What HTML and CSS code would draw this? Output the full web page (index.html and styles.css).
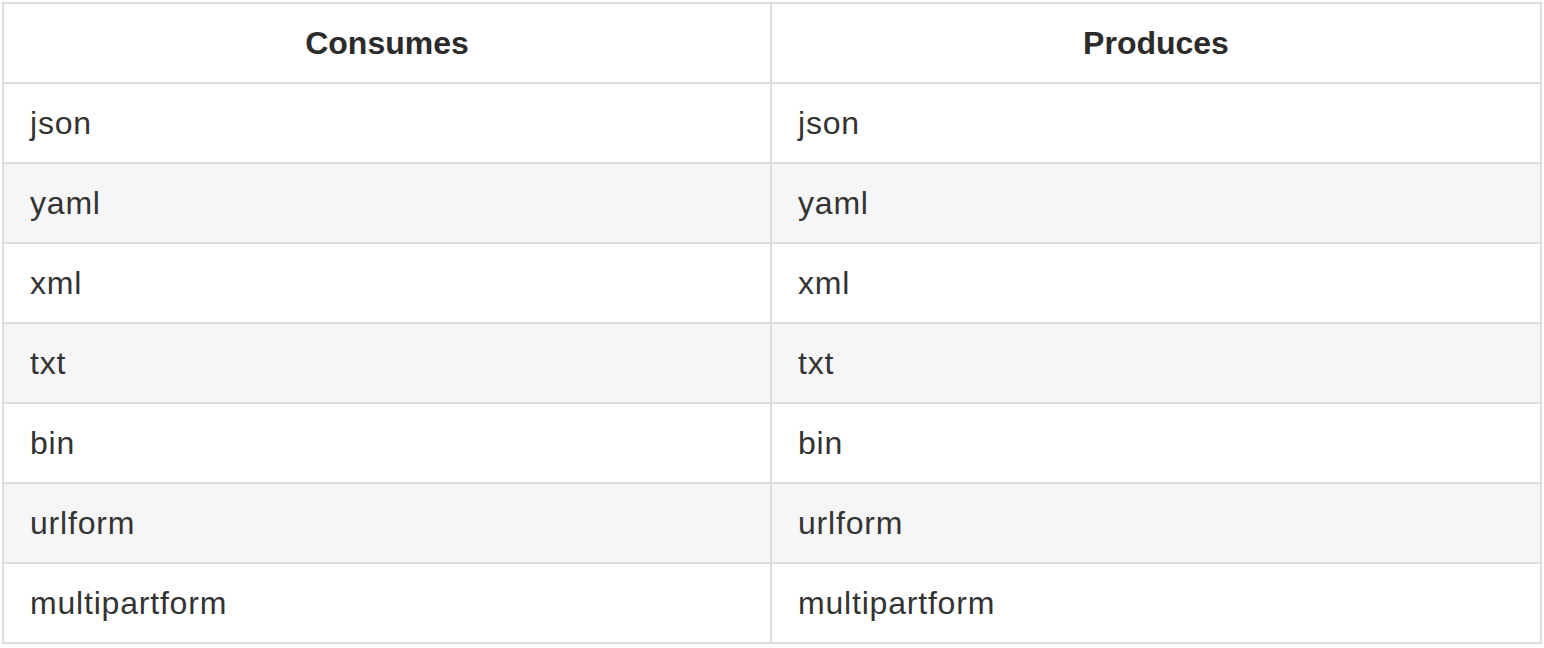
FILE: index.html
```html
<!DOCTYPE html>
<html>
<head>
<meta charset="utf-8">
<link rel="stylesheet" href="styles.css">
</head>
<body>
<div class="wrap">
<table class="media-table">
<colgroup><col class="col-a"><col class="col-b"></colgroup>
<thead>
<tr><th>Consumes</th><th>Produces</th></tr>
</thead>
<tbody>
<tr><td>json</td><td>json</td></tr>
<tr><td>yaml</td><td>yaml</td></tr>
<tr><td>xml</td><td>xml</td></tr>
<tr><td>txt</td><td>txt</td></tr>
<tr><td>bin</td><td>bin</td></tr>
<tr><td>urlform</td><td>urlform</td></tr>
<tr><td>multipartform</td><td>multipartform</td></tr>
</tbody>
</table>
</div>
</body>
</html>
```
FILE: styles.css
```css
html, body {
  margin: 0;
  padding: 0;
  background: #fff;
}
.wrap {
  padding: 2px;
}
.media-table {
  width: 1540px;
  border-collapse: collapse;
  table-layout: fixed;
  font-family: "Liberation Sans", Arial, sans-serif;
  font-size: 32px;
  color: #333;
}
.col-a {
  width: 768px;
}
.media-table th,
.media-table td {
  border: 2px solid #ddd;
  height: 78px;
  padding: 0 24px 0 26px;
  vertical-align: middle;
  box-sizing: content-box;
  line-height: 1.2;
}
.media-table th {
  font-weight: bold;
  text-align: center;
  color: #2b2b2b;
  padding: 0 24px;
}
.media-table td {
  text-align: left;
  letter-spacing: 0.8px;
}
.media-table tbody tr:nth-child(even) td {
  background: #f6f6f6;
}
```
